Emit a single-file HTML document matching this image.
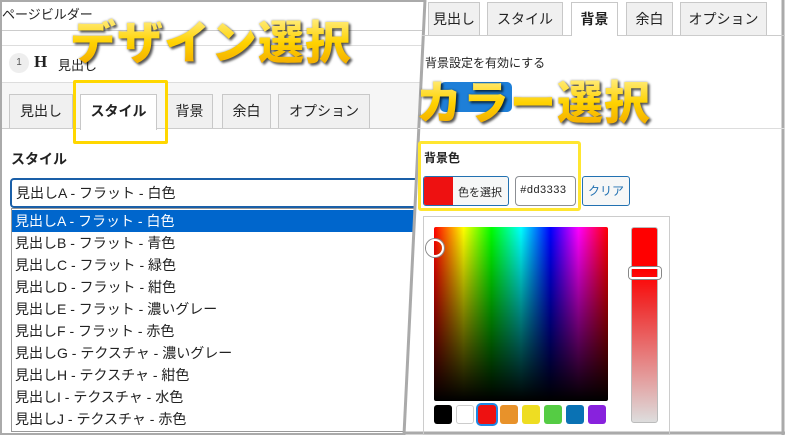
<!DOCTYPE html>
<html><head><meta charset="utf-8"><style>
*{box-sizing:border-box;margin:0;padding:0}
body{width:785px;height:435px;overflow:hidden;background:#fff;position:relative;font-family:"Liberation Sans","Noto Sans CJK JP",sans-serif;color:#222}
.a{position:absolute}
.tab{position:absolute;background:#f0f0f0;border:1px solid #c8c8c8;border-bottom:none;font-size:14px;text-align:center;line-height:32px;color:#222}
.tab.on{background:#fff;font-weight:bold;height:36px}
.big{position:absolute;font-weight:900;font-family:"Noto Sans CJK JP",sans-serif;color:#ffd21a;background:linear-gradient(#fff3a0,#ffd200 55%,#f2a800);-webkit-background-clip:text;background-clip:text;-webkit-text-fill-color:transparent;filter:drop-shadow(2px 2px 1px rgba(0,0,0,.55)) drop-shadow(0 0 1px rgba(0,0,0,.4));letter-spacing:1px}
.li{height:22px;line-height:22px;font-size:14px;padding-left:3px;color:#222;white-space:nowrap}
.sw{position:absolute;top:405px;width:18px;height:19px;border-radius:3px}
</style></head><body>
<div class="a" style="left:0;top:0;width:785px;height:435px;border:2px solid #aaa;border-right:none"></div>
<!-- left panel -->
<div class="a" style="left:2px;top:4px;font-size:13px">ページビルダー</div>
<div class="a" style="left:2px;top:30px;width:420px;border-top:1px solid #ccc"></div>
<div class="a" style="left:2px;top:45px;width:420px;border-top:1px solid #ddd"></div>
<div class="a" style="left:9px;top:53px;width:20px;height:20px;border-radius:50%;background:#eee;font-size:10px;text-align:center;line-height:20px;color:#555">1</div>
<div class="a" style="left:34px;top:52px;font:bold 17px 'Liberation Serif',serif">H</div>
<div class="a" style="left:58px;top:55px;font-size:13px">見出し</div>
<div class="a" style="left:2px;top:82px;width:420px;height:46px;background:#f6f6f6;border-top:1px solid #ddd"></div>
<div class="tab" style="left:9px;top:94px;width:64px;height:34px">見出し</div>
<div class="tab on" style="left:80px;top:94px;width:77px">スタイル</div>
<div class="tab" style="left:166px;top:94px;width:47px;height:34px">背景</div>
<div class="tab" style="left:222px;top:94px;width:49px;height:34px">余白</div>
<div class="tab" style="left:278px;top:94px;width:92px;height:34px">オプション</div>
<div class="a" style="left:2px;top:128px;width:78px;border-top:1px solid #ccc"></div>
<div class="a" style="left:157px;top:128px;width:270px;border-top:1px solid #ccc"></div>
<div class="a" style="left:73px;top:80px;width:95px;height:64px;border:3px solid #ffd700;border-radius:2px"></div>
<div class="a" style="left:11px;top:149px;font-size:14px;font-weight:bold">スタイル</div>
<div class="a" style="left:10px;top:178px;width:420px;height:30px;border:2px solid #1a5fa8;border-radius:4px;font-size:14px;line-height:26px;padding-left:4px">見出しA - フラット - 白色</div>
<div class="a" style="left:11px;top:208px;width:405px;height:224px;border:1px solid #999;background:#fff;padding-top:1px">
<div class="li" style="background:#0066cc;color:#fff">見出しA - フラット - 白色</div>
<div class="li">見出しB - フラット - 青色</div>
<div class="li">見出しC - フラット - 緑色</div>
<div class="li">見出しD - フラット - 紺色</div>
<div class="li">見出しE - フラット - 濃いグレー</div>
<div class="li">見出しF - フラット - 赤色</div>
<div class="li">見出しG - テクスチャ - 濃いグレー</div>
<div class="li">見出しH - テクスチャ - 紺色</div>
<div class="li">見出しI - テクスチャ - 水色</div>
<div class="li">見出しJ - テクスチャ - 赤色</div>
</div>
<div class="big" style="left:70px;top:12px;font-size:46px;line-height:56px">デザイン選択</div>
<!-- right panel -->
<div class="a" style="left:0;top:0;width:785px;height:435px;background:#fff;clip-path:polygon(424px 0,785px 0,785px 435px,403px 435px)"></div>
<svg class="a" style="left:0;top:0" width="785" height="435"><line x1="425" y1="0" x2="404" y2="435" stroke="#aaa" stroke-width="3"/><line x1="404" y1="433" x2="785" y2="433" stroke="#aaa" stroke-width="3"/><line x1="783" y1="0" x2="783" y2="435" stroke="#aaa" stroke-width="3"/></svg>
<div class="tab" style="left:428px;top:2px;width:52px;height:33px">見出し</div>
<div class="tab" style="left:487px;top:2px;width:76px;height:33px">スタイル</div>
<div class="tab on" style="left:571px;top:2px;width:47px;height:34px;line-height:32px">背景</div>
<div class="tab" style="left:626px;top:2px;width:47px;height:33px">余白</div>
<div class="tab" style="left:680px;top:2px;width:87px;height:33px">オプション</div>
<div class="a" style="left:422px;top:35px;width:149px;border-top:1px solid #ccc"></div>
<div class="a" style="left:618px;top:35px;width:167px;border-top:1px solid #ccc"></div>
<div class="a" style="left:425px;top:54px;font-size:12px">背景設定を有効にする</div>
<div class="a" style="left:440px;top:82px;width:72px;height:30px;background:#1e7fd8;border-radius:5px"></div>
<div class="a" style="left:418px;top:128px;width:367px;border-top:1px solid #ddd"></div>
<div class="big" style="left:416px;top:72px;font-size:46px;line-height:56px">カラー選択</div>
<div class="a" style="left:418px;top:141px;width:163px;height:70px;border:3px solid #ffe630;border-radius:3px"></div>
<div class="a" style="left:424px;top:149px;font-size:12px;font-weight:bold">背景色</div>
<div class="a" style="left:423px;top:176px;width:86px;height:30px;border:1px solid #2271b1;border-radius:3px;background:#f6f7f7;overflow:hidden"><div style="position:absolute;left:0;top:0;width:29px;height:30px;background:#ee1111"></div><div style="position:absolute;left:34px;top:7px;font-size:11px">色を選択</div></div>
<div class="a" style="left:515px;top:176px;width:61px;height:30px;border:1px solid #8c8f94;border-radius:4px;font:11px 'Liberation Mono',monospace;line-height:28px;padding-left:4px">#dd3333</div>
<div class="a" style="left:582px;top:176px;width:48px;height:30px;border:1px solid #2271b1;border-radius:3px;background:#f6f7f7;font-size:12px;line-height:28px;text-align:center;color:#2271b1">クリア</div>
<div class="a" style="left:423px;top:216px;width:247px;height:219px;border:1px solid #ccc"></div>
<div class="a" style="left:434px;top:227px;width:174px;height:174px;background:linear-gradient(transparent,#000),linear-gradient(90deg,#f00,#ff0 17%,#0f0 33%,#0ff 50%,#00f 67%,#f0f 83%,#f00);border-radius:2px"></div>
<div class="a" style="left:426px;top:239px;width:18px;height:18px;border:2px solid #fff;border-radius:50%;box-shadow:0 0 0 1px #888"></div>
<div class="a" style="left:631px;top:227px;width:27px;height:196px;background:linear-gradient(#f00 22%,#e33 40%,#ddd);border-radius:3px;border:1px solid #bbb"></div>
<div class="a" style="left:629px;top:267px;width:32px;height:12px;border:2px solid #fff;border-radius:3px;box-shadow:0 0 0 1px #888"></div>
<div class="sw" style="left:434px;background:#000"></div>
<div class="sw" style="left:456px;background:#fff;border:1px solid #ccc"></div>
<div class="sw" style="left:478px;background:#ee1111;box-shadow:0 0 0 2px #1e88e5"></div>
<div class="sw" style="left:500px;background:#e8922a"></div>
<div class="sw" style="left:522px;background:#eedd22"></div>
<div class="sw" style="left:544px;background:#55cc44"></div>
<div class="sw" style="left:566px;background:#0a72b4"></div>
<div class="sw" style="left:588px;background:#8822dd"></div>
</body></html>
